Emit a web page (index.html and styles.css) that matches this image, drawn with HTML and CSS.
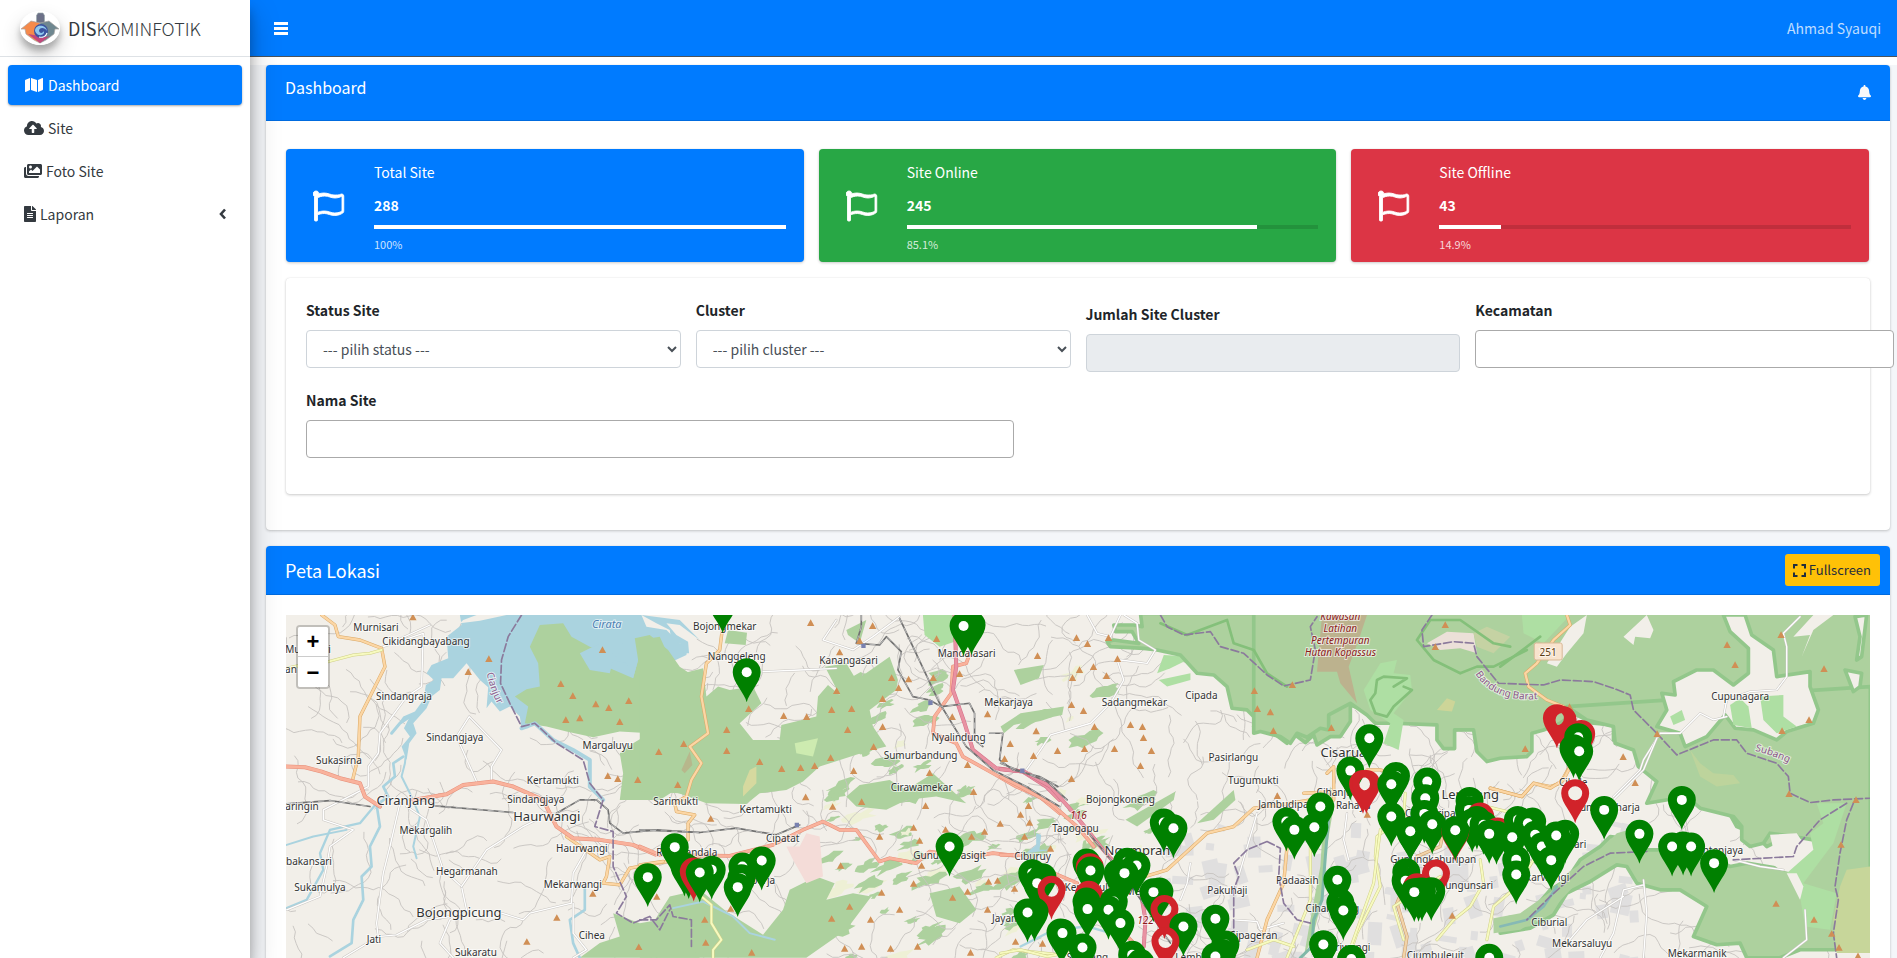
FILE: index.html
```html
<!DOCTYPE html>
<html lang="id">
<head>
<meta charset="utf-8">
<title>Diskominfotik - Dashboard</title>
<link rel="stylesheet" href="styles.css">
</head>
<body>
<svg width="0" height="0" class="symbols" aria-hidden="true">
  <symbol id="flag" viewBox="0 0 512 512"><path fill="#fff" stroke="#fff" stroke-width="14" d="M336.170 80c-49.130 0-93.300-32-161.910-32-31.300 0-58.300 6.480-80.720 13.170C95.760 34.200 74.700 16 48 16 21.530 16 0 37.500 0 64c0 17.700 9.700 33.200 24 41.500V484c0 6.600 5.400 12 12 12h24c6.600 0 12-5.400 12-12v-85.600c28.300-12.100 63.700-22.400 114.400-22.400 49.100 0 93.300 32 161.900 32 58.500 0 102-22.600 128.500-40 9.400-6.200 15.200-16.700 15.200-28V95.900c0-23.300-24.200-38.800-45.400-29C412.600 82.500 371.900 80 336.170 80zM464 336c-21.800 15.400-60.800 32-115.700 32-59.900 0-102-32-161.900-32-43.400 0-96.400 9.400-114.400 24V128c21.800-15.400 60.800-32 115.700-32 59.900 0 102 32 161.900 32 43.300 0 92.400-16 114.400-32v240z"/></symbol>
</svg>
<div class="app">
  <aside class="sidebar">
    <a class="brand" href="#">
      <svg class="brand-logo" viewBox="0 0 40 34" aria-hidden="true">
        <ellipse cx="20" cy="17" rx="20" ry="17" fill="#fff"/>
        <path d="M16.500 12V4.500L18 2h5l1.500 2.500V12z" fill="#6c7188" stroke="#9aa" stroke-width=".6"/>
        <path d="M1 18l10-8 9 2v20l-6-3-8-6-1-5z" fill="#f58a4b" stroke="#a9a3a0" stroke-width=".7"/>
        <path d="M39 18l-10-8-9 2v20l6-3 8-6 1-5z" fill="#6f8790" stroke="#a9a3a0" stroke-width=".7"/>
        <path d="M8 23l12 9 10-7-4 1-12-2z" fill="#c2477a"/>
        <circle cx="21" cy="20" r="7" fill="#3c54a0"/>
        <path d="M15 20c0-7 11-7 12 0-2-4-8-4-8 0 1 3 4 2 5 0 1 5-7 6-9 0z" fill="#8fc7ee"/>
        <path d="M19 26c4 1 7-1 8-4" fill="none" stroke="#fff" stroke-width="1.200"/>
      </svg>
      <span class="brand-text"><b>DIS</b>KOMINFOTIK</span>
    </a>
    <nav class="side-nav">
      <a class="side-link active" href="#">
        <svg width="20" height="16" viewBox="0 0 576 512"><path fill="currentColor" d="M0 117.660v346.320c0 11.320 11.430 19.060 21.940 14.860L160 416V32L20.120 87.950A32.006 32.006 0 0 0 0 117.660zM192 416l192 64V96L192 32v384zM554.060 33.160L416 96v384l139.880-55.950A31.996 31.996 0 0 0 576 394.340V48.020c0-11.320-11.430-19.060-21.940-14.860z"/></svg>
        <span>Dashboard</span></a>
      <a class="side-link" href="#">
        <svg width="20" height="16" viewBox="0 0 640 512"><path fill="currentColor" d="M537.600 226.600c4.100-10.700 6.400-22.400 6.400-34.600 0-53-43-96-96-96-19.700 0-38.100 6-53.300 16.200C367 64.200 315.300 32 256 32c-88.400 0-160 71.600-160 160 0 2.700.1 5.400.2 8.100C40.200 219.800 0 273.200 0 336c0 79.500 64.500 144 144 144h368c70.700 0 128-57.300 128-128 0-61.900-44-113.600-102.400-125.400zM393.400 288H328v112c0 8.800-7.200 16-16 16h-48c-8.800 0-16-7.200-16-16V288h-65.400c-14.300 0-21.400-17.200-11.300-27.300l105.400-105.400c6.200-6.200 16.400-6.200 22.600 0l105.400 105.400c10.100 10.100 2.900 27.300-11.300 27.300z"/></svg>
        <span>Site</span></a>
      <a class="side-link" href="#">
        <svg width="18" height="16" viewBox="0 0 576 512"><path fill="currentColor" d="M480 416v16c0 26.500-21.500 48-48 48H48c-26.500 0-48-21.500-48-48V176c0-26.500 21.500-48 48-48h16v208c0 44.100 35.900 80 80 80h336zm96-80V80c0-26.500-21.500-48-48-48H144c-26.500 0-48 21.500-48 48v256c0 26.500 21.500 48 48 48h384c26.500 0 48-21.500 48-48zM256 128c0 26.500-21.500 48-48 48s-48-21.500-48-48 21.500-48 48-48 48 21.500 48 48zm-96 144l55.500-55.500c4.700-4.700 12.300-4.700 17 0L272 256l135.500-135.500c4.700-4.700 12.300-4.700 17 0L512 208v112H160v-48z"/></svg>
        <span>Foto Site</span></a>
      <a class="side-link" href="#">
        <svg width="12" height="16" viewBox="0 0 384 512"><path fill="currentColor" d="M224 136V0H24C10.700 0 0 10.700 0 24v464c0 13.300 10.700 24 24 24h336c13.300 0 24-10.700 24-24V160H248c-13.200 0-24-10.800-24-24zm64 236c0 6.600-5.400 12-12 12H108c-6.600 0-12-5.400-12-12v-8c0-6.600 5.400-12 12-12h168c6.600 0 12 5.400 12 12v8zm0-64c0 6.600-5.400 12-12 12H108c-6.600 0-12-5.400-12-12v-8c0-6.600 5.400-12 12-12h168c6.600 0 12 5.400 12 12v8zm0-72v8c0 6.600-5.400 12-12 12H108c-6.600 0-12-5.400-12-12v-8c0-6.600 5.400-12 12-12h168c6.600 0 12 5.400 12 12zm96-114.100v6.100H256V0h6.100c6.400 0 12.500 2.500 17 7l97.900 98c4.500 4.500 7 10.600 7 16.900z"/></svg>
        <span>Laporan</span>
        <svg class="side-arrow" width="7" height="12" viewBox="0 0 7 12"><path fill="none" stroke="currentColor" stroke-width="2.600" d="M6 1.500L2 6l4 4.500"/></svg></a>
    </nav>
  </aside>

  <div class="main">
    <header class="topbar">
      <button class="menu-btn" aria-label="Menu"><svg width="14" height="13" viewBox="0 0 14 13"><path fill="#fff" d="M0 0h14v3H0zM0 5h14v3H0zM0 10h14v3H0z"/></svg></button>
      <a class="user" href="#">Ahmad Syauqi</a>
    </header>
    <div class="content-top"></div>
    <main class="content">
      <section class="card">
        <div class="card-head">
          <h1 class="title">Dashboard</h1>
          <button class="bell" aria-label="Notifikasi"><svg width="13" height="15" viewBox="0 0 448 512"><path fill="#f8f9fa" d="M224 512c35.320 0 63.970-28.650 63.970-64H160.030c0 35.350 28.650 64 63.970 64zm215.390-149.710c-19.320-20.760-55.470-51.990-55.470-154.290 0-77.700-54.480-139.900-127.940-155.160V32c0-17.670-14.320-32-31.980-32s-31.980 14.330-31.980 32v20.840C118.560 68.100 64.080 130.300 64.080 208c0 102.300-36.150 133.530-55.470 154.290-6 6.450-8.660 14.160-8.610 21.710.11 16.400 12.980 32 32.100 32h383.800c19.120 0 32-15.600 32.100-32 .05-7.550-2.610-15.270-8.610-21.710z"/></svg></button>
        </div>
        <div class="card-body">
          <div class="stats">
            <article class="stat blue">
              <svg class="flag"><use href="#flag"/></svg>
              <div class="stat-info"><span>Total Site</span><b>288</b><div class="bar"><i style="width:100%"></i></div><small>100%</small></div>
            </article>
            <article class="stat green">
              <svg class="flag"><use href="#flag"/></svg>
              <div class="stat-info"><span>Site Online</span><b>245</b><div class="bar"><i style="width:85.1%"></i></div><small>85.1%</small></div>
            </article>
            <article class="stat red">
              <svg class="flag"><use href="#flag"/></svg>
              <div class="stat-info"><span>Site Offline</span><b>43</b><div class="bar"><i style="width:14.9%"></i></div><small>14.9%</small></div>
            </article>
          </div>
          <form class="filters">
            <div class="field"><label for="status">Status Site</label><select id="status"><option>--- pilih status ---</option></select></div>
            <div class="field"><label for="cluster">Cluster</label><select id="cluster"><option>--- pilih cluster ---</option></select></div>
            <div class="field lowered"><label for="jumlah">Jumlah Site Cluster</label><input id="jumlah" type="text" disabled></div>
            <div class="field"><label for="kecamatan">Kecamatan</label><input class="picker" id="kecamatan" type="text"></div>
            <div class="field wide"><label for="nama">Nama Site</label><input class="picker" id="nama" type="text"></div>
          </form>
        </div>
      </section>

      <section class="card">
        <div class="card-head map-head">
          <h2 class="title large">Peta Lokasi</h2>
          <button class="full-btn"><svg width="13" height="13" viewBox="0 0 13 13"><path fill="none" stroke="currentColor" stroke-width="2" d="M1 4.500V1h3.500M8.500 1H12v3.500M12 8.500V12H8.500M4.500 12H1V8.500"/></svg>Fullscreen</button>
        </div>
        <div class="map-body">
          <div class="map">
            <svg class="map-canvas" id="map" viewBox="285 615 1585 500" preserveAspectRatio="xMidYMin slice"></svg>
            <div class="zoom"><button aria-label="Zoom in">+</button><button aria-label="Zoom out">−</button></div>
          </div>
        </div>
      </section>
    </main>
  </div>
</div>
<script src="map.js"></script>
</body>
</html>
```
FILE: styles.css
```css
* { box-sizing: border-box; }
body { margin: 0; font: 14px/24px "Noto Sans CJK SC", "Noto Sans", sans-serif; color: #212529; background: #f4f6f9; }
button, input, select { font: inherit; }
button { cursor: pointer; }
a { text-decoration: none; }
svg { flex: none; }
.symbols { display: none; }
.app { display: flex; height: 100vh; overflow: hidden; }

.sidebar { width: 250px; flex: none; background: #fff; z-index: 2; box-shadow: 0 14px 28px rgba(0,0,0,.25), 0 10px 10px rgba(0,0,0,.22); }
.brand { display: flex; align-items: center; gap: 8px; height: 57px; padding: 0 20px; border-bottom: 1px solid #dee2e6; color: #343a40; }
.brand-logo { width: 40px; height: 34px; border-radius: 50%; box-shadow: 0 10px 20px rgba(0,0,0,.19), 0 6px 6px rgba(0,0,0,.23); }
.brand-text { font-size: 18px; font-weight: 300; }
.brand-text b { font-weight: 400; }
.side-nav { display: grid; gap: 3px; padding: 8px; }
.side-link { display: flex; align-items: center; gap: 4px; height: 40px; padding: 0 16px; border-radius: 4px; color: #343a40; }
.side-link.active { background: #007bff; color: #fff; box-shadow: 0 1px 3px rgba(0,0,0,.12), 0 1px 2px rgba(0,0,0,.24); }
.side-arrow { margin-left: auto; }

.main { flex: 1; min-width: 0; }
.topbar { display: flex; align-items: center; justify-content: space-between; height: 57px; padding: 0 16px 0 24px; background: #007bff; border-bottom: 1px solid #4b545c; }
.menu-btn { display: flex; padding: 0; border: 0; background: none; }
.user { color: rgba(255,255,255,.75); }
.content-top { height: 8px; background: #fff; }
.content { display: grid; gap: 16px; padding: 0 7px 0 16px; }
.card { min-width: 0; background: #fff; border-radius: 4px; box-shadow: 0 0 1px rgba(0,0,0,.125), 0 1px 3px rgba(0,0,0,.2); }
.card-head { display: flex; justify-content: space-between; height: 56px; padding: 10px 19px; background: #007bff; color: #fff; border-bottom: 1px solid rgba(0,0,0,.125); border-radius: 4px 4px 0 0; }
.title { margin: 0; font-size: 16px; font-weight: 400; line-height: 24px; }
.title.large { font-size: 18px; line-height: 32px; }
.bell { display: flex; align-items: center; padding: 0; border: 0; background: none; }
.card-body { padding: 28px 20px 36px; }
.stats { display: grid; grid-template-columns: repeat(3, 1fr); gap: 15px; padding-right: 1px; }
.stat { display: flex; align-items: center; height: 113px; padding: 8px; border-radius: 4px; color: #fff; box-shadow: 0 0 1px rgba(0,0,0,.125), 0 1px 3px rgba(0,0,0,.2); }
.blue { background: #007bff; }
.green { background: #28a745; }
.red { background: #dc3545; }
.flag { width: 32px; height: 32px; margin: 0 19px; }
.stat-info { display: flex; flex: 1; flex-direction: column; padding: 2px 10px 0; }
.stat-info b { margin-top: 9px; }
.bar { height: 4px; margin: 8px 0 5px; background: rgba(0,0,0,.125); }
.bar i { display: block; height: 100%; background: #fff; }
.stat small { font-size: 11px; line-height: 20px; color: rgba(255,255,255,.8); }

.filters { display: grid; grid-template-columns: repeat(4, minmax(0, 1fr)); gap: 20px 15px; height: 216px; margin-top: 16px; padding: 20px; align-content: start; border-radius: 4px; box-shadow: 0 0 1px rgba(0,0,0,.125), 0 1px 3px rgba(0,0,0,.2); }
.field label { display: block; margin-bottom: 8px; font-weight: 700; }
.field { height: 70px; }
.lowered { padding-top: 4px; }
.field input, .field select { display: block; width: 100%; height: 38px; border: 1px solid #ced4da; border-radius: 4px; background: #fff; color: #495057; }
.field select { padding: 0 12px; }
.field input:disabled { background: #e9ecef; }
.field .picker { width: 419px; border-color: #aaa; }
.wide { grid-column: span 4; }
.wide .picker { width: 708px; }

.map-head { height: 49px; padding: 8px 10px 8px 19px; }
.full-btn { display: flex; align-items: center; gap: 3px; height: 32px; padding: 0 9px 0 8px; border: 0; border-radius: 3px; background: #ffc107; color: #1f2d3d; font-size: 13px; }
.map-body { padding: 20px; }
.map { position: relative; overflow: hidden; background: #f2efe9; }
.map-canvas { display: block; width: 100%; font-family: "Noto Sans", sans-serif; }
.zoom { position: absolute; top: 10px; left: 10px; border: 2px solid rgba(0,0,0,.2); border-radius: 4px; background-clip: padding-box; }
.zoom button { display: block; width: 30px; height: 30px; padding: 0; border: 0; background: #fff; color: #000; font: bold 22px/29px "Liberation Sans", sans-serif; }
.zoom button:first-child { border-bottom: 1px solid #ccc; border-radius: 2px 2px 0 0; }
.zoom button:last-child { border-radius: 0 0 2px 2px; }
.label { font-size: 10px; fill: #333; stroke: #fff; stroke-width: 2px; stroke-opacity: .6; paint-order: stroke; text-anchor: middle; }
.label.town { font-size: 13px; }
.label.water { fill: #4d80b3; font-style: italic; font-size: 11px; }
.label.area { fill: #8d5a8a; text-anchor: start; }
.label.restricted { fill: #8b1a1a; font-style: italic; }
.label.shield { fill: #5a3a10; }
```
FILE: map.js
```js
// Tiles are drawn at three units per screen pixel.
const A = [279, 600], B = [639, 600], C = [1000, 600], D = [1260, 720], E = [1500, 520], F = [1260, 600];
const out = [];
const wrap = (t, body) => `<g transform="translate(${t[0]} ${t[1]}) scale(.33333)">${body}</g>`;
const poly = (t, pts, fill, extra = '') => out.push(wrap(t, `<path d="M${pts}Z" fill="${fill}" stroke-linejoin="round" ${extra}/>`));
const line = (t, pts, color, w, extra = '') => out.push(wrap(t, `<path d="M${pts}" fill="none" stroke="${color}" stroke-width="${w}" stroke-linejoin="round" stroke-linecap="round" ${extra}/>`));
const road = (t, pts, fill, edge, w) => { line(t, pts, edge, w + 3); line(t, pts, fill, w); };

let seed = 41;
const rnd = () => (seed = (seed * 16807) % 2147483647) / 2147483647;

out.push('<rect x="285" y="615" width="1585" height="500" fill="#f2efe9"/>');

// built-up areas
for (let i = 0; i < 130; i++) {
  const x = 1150 + rnd() * 480, y = 820 + rnd() * 150;
  out.push(`<rect x="${x | 0}" y="${y | 0}" width="${6 + rnd() * 16 | 0}" height="${5 + rnd() * 20 | 0}" fill="#e0dfdf" transform="rotate(${rnd() * 40 - 20 | 0} ${x | 0} ${y | 0})"/>`);
}

// small woods and fields
for (let i = 0; i < 130; i++) {
  const x = 830 + rnd() * 320, y = 670 + rnd() * 290;
  if (x > 1020 && y > 860 || x > 980 && y < 780 && rnd() < .8) continue;
  let d = '';
  const n = 14, r = 4 + rnd() * 8;
  for (let k = 0; k < n; k++) {
    const a = k / n * 6.283, q = r * (.4 + rnd() * .8);
    d += (k ? 'L' : 'M') + (x + Math.cos(a) * q * 1.5 | 0) + ' ' + (y + Math.sin(a) * q * .7 - Math.cos(a) * q * .5 | 0);
  }
  out.push(`<path d="${d}Z" fill="${rnd() < .75 ? '#add19e' : '#eef0d5'}"/>`);
}

// minor roads
let minor = '';
for (let i = 0; i < 560; i++) {
  let x = 285 + rnd() * 1585, y = 600 + rnd() * 370, a = rnd() * 6.283;
  minor += `M${x | 0} ${y | 0}`;
  const n = 4 + rnd() * 12;
  for (let k = 0; k < n; k++) {
    a += (rnd() - .5) * 1.5;
    x += Math.cos(a) * 6; y += Math.sin(a) * 6;
    minor += `L${x.toFixed(1)} ${y.toFixed(1)}`;
  }
}
out.push(`<path d="${minor}" fill="none" stroke="#c6c3c0" stroke-width=".9"/>`);

// lake
poly(A, '545 75L500 110 505 175 455 195 440 220 462 240 438 255 430 300 405 335 370 350 345 385 370 365 390 350 372 385 390 410 365 440 380 480 388 430 410 400 400 370 440 325 455 290 480 270 485 235 520 235 560 190 600 240 625 262 620 325 635 305 660 335 690 320 720 350 725 385 745 385 765 360 860 300 960 330 1070 235 1220 165 1225 130 1180 110 1150 60 1100 45 540 45', '#aad3df');
poly(A, '540 70L600 62 680 45 590 45 550 60', '#f2efe9');
poly(A, '1085 45L1100 80 1160 90 1200 130 1240 140 1260 45', '#f2efe9');
poly(A, '1085 45L1130 70 1170 90 1175 120 1210 135 1212 160 1228 160 1225 125 1190 105 1160 70 1200 75 1260 120 1200 60', '#aad3df');

// forests
const wood = '#add19e';
poly(A, '780 75L850 70 875 110 930 140 960 150 980 200 1060 235 1075 180 1065 115 1110 105 1165 150 1200 200 1260 240 1260 600 1180 575 1140 600 1020 600 1030 520 1020 460 1060 430 1110 400 1020 395 940 412 860 395 800 380 735 370 745 320 705 290 740 268 780 260 775 190 750 140', wood);
poly(A, '900 160L930 210 990 220 1000 180 1040 190 1060 235 1075 180 1030 130 1010 170 960 130', '#aad3df');
poly(B, '0 120L60 110 85 165 130 220 190 205 200 290 235 260 270 270 340 260 365 310 300 370 340 420 420 420 425 375 530 350 535 290 565 255 600 285 556 200 620 190 650 240 750 170 775 240 770 270 690 330 700 380 740 440 680 455 540 500 490 545 440 570 360 580 320 612 200 610 120 580 0 575', wood);
poly(B, '255 130L265 90 322 98 318 135', wood);
poly(B, '90 890L180 870 260 935 370 1005 430 930 450 870 530 830 585 850 560 900 640 880 695 890 620 990 500 1074 0 1074 20 1000', wood);
poly(B, '620 590L660 555 750 540 800 570 880 520 980 610 890 590 800 600 740 630 650 620', wood);
poly(B, '870 880L960 860 1010 930 960 970 890 950', wood);
poly(B, '620 90L680 60 660 130 625 105', wood);
poly(B, '850 45L945 45 945 125 900 140 855 105', '#aedfa3');
poly(B, '465 430L535 415 520 470 470 460', '#cdebb0');
poly(B, '330 510L350 500 350 550 310 590 310 560', '#d6d99f');
poly(B, '125 510L150 455 158 495 135 520', '#b7b78c');
poly(A, '900 1074L960 1030 1020 1010 1000 940 1080 970 1140 960 1200 1000 1260 1074', wood);
poly(B, '440 740L480 740 500 700 540 710 550 830 500 850 460 780', '#f4dcd8');
poly(C, '40 210L130 195 115 235 60 255', wood);
poly(C, '0 380L60 340 190 320 185 345 40 375 10 400', wood);
poly(C, '470 220L490 165 580 170 510 205', '#aedfa3');
poly(C, '475 240L570 220 570 240 500 260', '#aedfa3');
poly(C, '590 670L700 570 705 600 640 660', wood);
poly(C, '375 660L525 575 520 600 410 680', wood);
const edge = 'stroke="#93c78b" stroke-width="11"';
poly(C, '420 40L425 80 400 75 340 75 345 95 395 95 415 130 340 120 320 125 330 140 430 145 470 150 540 165 590 220 640 225 680 260 695 325 740 330 770 360 760 380 820 400 860 430 885 405 915 428 940 405 950 435 990 410 1020 410 1050 365 1050 315 1120 340 1140 370 1260 370 1260 40', wood, edge);
poly(F, '-20 30L-20 400 0 395 60 410 90 430 110 400 140 412 180 385 205 390 205 345 270 310 320 345 345 370 400 370 530 375 530 420 550 446 583 446 583 390 640 390 650 455 680 485 720 475 800 470 815 455 815 400 850 390 900 370 940 340 1000 370 1060 375 1060 420 1120 435 1135 500 1200 520 1250 540 1380 590 1430 680 1480 700 1520 740 1600 700 1830 600 1840 30', wood, edge);
poly(E, '200 560L260 600 340 620 345 670 400 690 415 740 470 785 440 850 560 830 600 865 700 890 725 920 725 960 750 980 790 970 810 940 880 950 940 960 960 990 920 1060 860 1050 740 1030 690 1040 600 1000 500 990 440 990 410 960 330 950 300 980 240 1020 200 1080 150 1110 90 1180 0 1210 0 1240 90 1225 160 1185 200 1120 270 1085 350 1035 380 1040 410 1090 480 1110 540 1110 620 1160 580 1250 650 1275 720 1270 740 1314 840 1314 900 1290 1111 1290 1111 500', wood, edge);
poly(E, '-20 1195L60 1180 160 1110 200 1060 290 1000 350 940 420 920 420 1000 300 1020 220 1100 150 1175 60 1230 -20 1240', wood);
poly(E, '810 945L890 940 910 970 950 980 880 1060 840 1050 800 1020 820 990', '#f2efe9');
poly(E, '910 1090L1000 970 1040 850 950 850 970 910 930 940 940 990 860 1060 900 1130 915 1220 990 1230 1010 1120', '#aedfa3');
poly(E, '1020 1100L1040 1050 1111 1040 1111 1300 1010 1300 1000 1200', '#c7d69a');
poly(E, '860 1060L890 1060 910 1100 900 1140', '#f2efe9');
poly(E, '520 485L590 450 640 450 700 495 745 460 745 385 690 335 670 285 735 285 755 345 820 390 830 470 930 455 930 500 955 570 940 610 860 635 830 660 760 630 705 625 675 585 620 650 555 680 540 640 470 620 500 570 485 520 525 525', '#f2efe9', edge);
poly(E, '905 410L940 330 1000 285 940 285 880 350 930 345', '#f2efe9');
poly(E, '1065 290L1100 285 1085 410 1070 420 1080 350', '#f2efe9', edge);
poly(E, '1035 450L1085 460 1080 500 1060 515', '#f2efe9', edge);
poly(E, '370 350L440 285 460 330 450 355 405 350 400 375', '#f2efe9');
poly(E, '690 555L720 535 745 560 755 625 700 615', '#aedfa3');
poly(E, '780 530L850 525 850 590 890 620 830 640 790 600', '#aedfa3');
poly(E, '510 590L545 570 555 600 520 615', '#aedfa3');
poly(E, '65 285L210 285 130 370 70 340', '#aedfa3');
poly(E, '210 320L260 285 250 340 200 400 170 440 140 430', '#f2efe9');
poly(E, '570 690L600 730 640 760 700 765 720 790 650 800 600 770', '#bdd49c');
poly(F, '500 130L560 95 640 100 650 160 600 145 540 150', '#ebe0d8');
poly(F, '640 100L680 80 750 110 700 160 650 140', '#c5d2a3');
poly(F, '310 270L360 190 410 180 400 220 450 225 455 270 400 340 430 360 415 450 370 430 390 370 330 330', '#aedfa3');
poly(F, '530 330L560 295 585 305 575 335', '#cdd598');
poly(F, '185 45L320 45 295 120 265 200 290 310 240 250 230 215 170 215', '#bcb28e');
line(F, '400 260L440 235 370 230 350 240 345 280 330 300 345 340 380 350 400 320 455 270 430 260', '#84c07a', 8);
line(F, '800 150L700 200 650 200 600 220 520 180 470 120 510 60 600 60 700 130 750 140', '#84c07a', 8);
line(E, '0 440L120 350', '#84c07a', 8);
line(C, '480 70L560 105 680 60 700 130 760 150 800 220 860 260', '#84c07a', 8);
poly(C, '990 560L1000 620 975 770 970 880 940 1000 910 1074 930 960 960 800 970 640', '#add19e');

// rivers
const river = '#aad3df';
line(A, '390 350L360 370 335 400', river, 9);
line(A, '370 470L340 490 345 530 310 560 325 590 290 615 300 680 270 740 275 800 245 830 250 900 220 960 215 1030 150 1070', river, 8);
line(A, '290 610L240 670 150 690 120 760 130 810 80 900 20 925', river, 7);
line(A, '20 735L100 710 200 690', river, 6);
line(A, '380 440L375 490 365 530 390 580 420 650 400 740 410 775', river, 6);
line(A, '725 385L765 370 820 420 880 450 930 480 930 560 970 600', river, 12);
line(A, '915 860L915 930 870 960 880 1030 900 1074', river, 8);
line(B, '100 925L190 905 280 950 330 1000 405 1020', river, 6);
line(C, '60 1040L160 990 260 980 330 1000', river, 7);
line(C, '985 650L975 770 965 900 940 960 935 1040 900 1074', '#7fb8a8', 9);
line(E, '170 1100L130 1160 80 1200 0 1220', '#86b9b5', 8);
poly(B, '1160 760L1190 735 1190 700 1205 705 1200 750 1240 750', river);

// secondary roads
const white = (t, p) => road(t, p, '#fff', '#c9c6c2', 4);
white(A, '450 75L310 140 430 100 425 260 380 290 300 400 295 460 265 500 265 560 130 630 130 660 220 690 150 740 140 800 120 890 20 930');
white(A, '590 545L530 410 568 350 665 450 635 500 635 545');
white(A, '360 610L330 740 310 820 290 970 295 1010 190 1074');
white(A, '380 620L440 660 490 810 545 860 560 930 510 960 480 1030 520 1074');
white(A, '770 660L730 680 620 750 545 860');
white(A, '300 1010L350 1005 440 960 510 950 M665 940L730 960 750 940 875 910 880 820 920 750');
white(A, '880 910L880 1000 920 1050 880 1074');
white(B, '370 215L480 210 590 205');
white(B, '590 60L550 120 640 150 700 110 780 50');
white(C, '260 45L290 100 330 110 360 45 M350 180L370 240 330 310 270 370 150 405 120 450 70 520');
white(C, '360 180L440 190 465 150 415 120 410 70 370 45');
white(C, '770 640L735 760 700 880');
white(C, '1040 640L1030 720 1045 780 M700 960L770 965 780 990 850 970');
white(F, '1200 400L1150 480 1140 510 1060 590');
white(E, '470 655L430 750 320 860 M600 580L540 640 480 640 M680 590L640 600 600 580 M670 590L680 540 750 515 830 510 860 470 860 380 850 340 900 290');
white(E, '430 1080L440 1180 430 1314 M430 1095L370 1110 340 1240 300 1314 M370 1130L260 1200 200 1270');
white(E, '850 1314L920 1260 915 1170 M700 1020L780 1040 850 1050');
white(C, '570 790L560 850 540 900');

// main roads
const orange = (t, p) => road(t, p, '#fcd6a4', '#d9a866', 7);
orange(A, '125 45L165 75 175 110 240 120 305 145 315 200 240 350 235 470 218 540');
orange(A, '860 710L960 780 990 770 980 830 970 850 1020 855 1050 805 1160 785');
orange(B, '250 70L240 150 200 190 185 290 205 400 150 440 185 490 155 540 140 590 105 610 110 635 165 645 145 670 145 720 M70 785L0 795');
orange(C, '400 840L500 810 620 700 700 680 760 625 840 615 930 600 M1000 600L1000 500 980 520 M860 740L850 850 800 960 770 1074');
orange(C, '910 580L1000 575 M1100 510L1140 510 1200 530');
orange(F, '920 45L930 75 880 120 830 190 795 220 805 260 860 300 910 320 M690 565L785 590 820 550 870 560 900 550 940 480');
road(D, '690 205L785 230 820 190 870 205 910 180 940 120', '#fcd6a4', '#d9a866', 7);
road(D, '550 330L540 380 470 410 410 550 440 650 430 714', '#f2d3a8', '#c69a68', 7);
const yellow = (t, p) => road(t, p, '#f7fabf', '#cfcf88', 6);
yellow(A, '20 205L65 195 M145 185L220 165 270 160 305 150');
yellow(B, '185 890L215 915 215 970 245 1020 220 1050 220 1074');
yellow(B, '1070 1074L1120 1050 1260 1065');
yellow(C, '0 1060L60 1050 140 1070 250 1050');
yellow(D, '435 220L430 290 350 350 345 410 360 500 290 640 265 714 M660 420L670 490 630 560 580 600 530 660 M540 470L400 560 430 660 M820 420L770 500 700 560 680 660');
yellow(C, '930 740L930 900 860 1074 M1140 690L1120 850 1040 1074 M880 1040L820 1020 740 1050');
yellow(D, '640 250L760 280 820 290');
road(A, '15 500L75 502 125 515 180 535 240 550 255 590 300 620 M400 600L500 583 550 555 640 545 700 560 790 600 830 680 880 715 960 720 1060 735 1130 765 1260 770', '#f9b29c', '#e58f7a', 9);
road(B, '0 740L60 765 270 768 400 735 490 690 550 665 600 690 650 690 720 785 750 775 830 790 870 755 900 760 M1000 770L1060 760 1130 768', '#f9b29c', '#e58f7a', 8);
road(B, '1010 60L1005 120 980 190 940 200 935 280 885 350 880 400 950 430 970 470 1060 520 1130 560 1200 590 1260 640', '#f9b29c', '#e58f7a', 8);
road(C, '0 530L60 560 150 610 230 680 280 740 M0 765L60 765 M160 820L230 850 M370 1000L400 1030', '#f9b29c', '#e58f7a', 8);
road(B, '945 45L950 200 940 270 975 370 1000 450 1070 505 1150 515 1220 560 1260 600', '#e892a2', '#d46f88', 9);
road(C, '0 508L70 515 150 560 220 640 300 740 330 775 420 870 435 960 430 1040', '#e892a2', '#d46f88', 9);
// railway
const rail = (t, p) => { line(t, p, '#707070', 5); line(t, p, '#ddd', 2, 'stroke-dasharray="16 16"'); };
rail(A, '20 612L150 602 270 620 M465 618L700 638 M830 640L900 600 950 600 985 630 990 670 1030 700 1130 690 1260 698');
rail(B, '0 690L180 698 290 685 410 705 480 675 M780 55L900 310 980 440 1060 510 1160 560 1260 620');
rail(B, '665 45L665 80 650 130 720 135 740 110 785 155 775 210 820 290 870 300 905 320 990 310 1005 340 1005 420 1030 440 M1050 400L1090 400 1080 480 1120 510 1200 530 1255 560');
rail(C, '0 490L140 545 200 600 M265 700L340 790 400 870 510 1030');

// administrative borders
const border = (t, p) => line(t, p, '#8b7a9c', 5, 'stroke-dasharray="24 9"');
border(A, '725 45L685 110 665 180 662 250 690 310 725 380 765 370 830 430 910 480 930 550 970 600 945 680 1000 695 1000 800 1040 890 1010 940 1060 970 1110 950 1140 990 1170 930');
border(B, '0 960L50 960 90 915 100 950 155 960 155 1040');
border(C, '480 45L500 80 550 105 630 95 660 140 730 160 800 225 850 258 930 240 945 150 930 80 950 50');
border(C, '800 725L740 750 700 790 715 830 700 870 700 1000 M800 725L840 745 835 830 850 910 890 960 930 970');
border(F, '515 45L485 90 490 140 580 125 640 130 650 170 715 250 850 255 900 240 1000 245 1060 265 1110 285 1120 330 1190 400');
border(E, '470 640L530 705 640 660 710 660 740 700 830 730 865 770 870 820 930 848 1000 840 1110 835 M1040 850L960 900 890 980 880 1010 700 1020 M1060 850L1040 900 1020 1000 1005 1100 1015 1140 1000 1240 1010 1314 M440 995L330 1000 250 1040 150 1130 80 1200');

// peaks
const peaks = [
  [A, '399 51 627 176 565 215 968 149 843 251 879 287 948 312 987 323 1047 302 858 359 900 354 1020 365 1137 455 1212 431 984 527 1014 536 1074 539 1194 554 939 881 1131 890 831 953 741 1025 1077 1041'],
  [B, '513 68 699 77 660 122 600 156 756 233 807 237 777 263 881 233 960 221 891 116 1194 167 591 272 729 296 576 329 636 326 327 326 432 347 501 350 624 389 729 380 702 440 938 350 1044 342 1190 393 1112 431 1182 467 1095 476 984 494 870 518 1002 575 261 389 261 452 360 485 426 506 483 503 525 497 573 473 642 512 498 591 579 620 666 605 858 617 1167 617 1143 644 1170 668 1082 671 1035 695 1155 710 996 710 918 689 822 683 720 710 840 722 846 797 603 797 822 851 984 875 726 878 939 893 1047 845 1074 842 1125 866 1233 746 213 656 630 920 576 956 693 959 780 929 1044 929 195 959 273 926 198 1028 336 1058 615 1046 666 1040 753 1046 834 1040 993 1058 1128 1025 1209 1031'],
  [C, '228 113 261 131 324 113 351 176 279 200 237 209 216 233 318 227 213 314 249 332 282 380 390 374 426 380 429 413 453 452 342 446 252 446 171 452 420 497 213 536 762 272 771 326 810 336 819 392 876 254 993 383 831 587 1101 644'],
  [F, '555 74 525 140 795 446 928 320 1089 470 1125 548'],
  [E, '681 374 705 434 843 344 972 446 927 599 846 632 471 641 867 821 1068 839 1023 974 828 1151 942 1199 995 1241 1017 1283 1074 1308'],
  [D, '576 587']
];
for (const [t, s] of peaks) {
  const v = s.split(' ').map(Number);
  let d = '';
  for (let i = 0; i < v.length; i += 2) d += `M${v[i] - 11} ${v[i + 1] + 10}h22l-11 -20z`;
  out.push(wrap(t, `<path d="${d}" fill="#d08f55"/>`));
}
// stations
out.push(wrap(B, '<path d="M665 131h13v13h-13zM866 302h13v13h-13zM1142 506h13v13h-13zM465 669h13v13h-13z" fill="#7981b0"/>'));
out.push('<rect x="1534" y="643" width="28" height="17" rx="2" fill="#f8e3cd" stroke="#d9b896"/>');

// place names: tile, x centre, baseline, text, kind
const labels = [
  [A, 287, 92, 'Murnisari'], [A, 439, 136, 'Cikidangbayabang'], [A, 85, 160, 'Mulyasari'], [A, 32, 220, 'an'], [A, 373, 301, 'Sindangraja'], [A, 526, 422, 'Sindangjaya'], [A, 178, 491, 'Sukasirna'],
  [A, 67, 631, 'aringin'], [A, 377, 615, 'Ciranjang', 'town'], [A, 439, 703, 'Mekargalih'], [A, 86, 796, 'bakansari'], [A, 119, 874, 'Sukamulya'], [A, 562, 824, 'Hegarmanah'],
  [A, 538, 950, 'Bojongpicung', 'town'], [A, 283, 1028, 'Jati'], [A, 589, 1067, 'Sukaratu'], [A, 818, 553, 'Kertamukti'], [A, 768, 608, 'Sindangjaya'], [A, 802, 664, 'Haurwangi', 'town'],
  [A, 906, 756, 'Haurwangi'], [A, 880, 864, 'Mekarwangi'], [A, 937, 1016, 'Cihea'], [A, 983, 446, 'Margaluyu'], [A, 981, 83, 'Cirata', 'water'],
  [B, 254, 89, 'Bojongmekar'], [B, 290, 179, 'Nanggeleng'], [B, 626, 192, 'Kanangasari'], [B, 981, 171, 'Mandalasari'], [B, 1107, 319, 'Mekarjaya'], [B, 958, 422, 'Nyalindung'],
  [B, 844, 476, 'Sumurbandung'], [B, 845, 574, 'Cirawamekar'], [B, 107, 616, 'Sarimukti'], [B, 379, 640, 'Kertamukti'], [B, 428, 725, 'Cipatat'], [B, 141, 768, 'Rajamandala'],
  [B, 340, 853, 'Sumberja'], [B, 929, 776, 'Gunungmasigit'], [B, 1178, 780, 'Ciburuy'], [B, 1130, 965, 'Jayamekar'],
  [C, 401, 319, 'Sadangmekar'], [C, 604, 297, 'Cipada'], [C, 699, 484, 'Pasirlangu'], [C, 760, 551, 'Tugumukti'], [C, 360, 610, 'Bojongkoneng'], [C, 226, 697, 'Tagogapu'],
  [C, 410, 766, 'Ngamprah', 'town'], [C, 1030, 471, 'Cisarua', 'town'], [C, 850, 625, 'Jambudipa'], [C, 1030, 587, 'Cihanjuang'], [C, 1060, 626, 'Rahayu'], [C, 890, 853, 'Padaasih'],
  [C, 682, 882, 'Pakuhaji'], [C, 995, 935, 'Cihanjuang'], [C, 760, 1017, 'Cipageran'], [C, 1040, 1052, 'Sariwangi'], [C, 273, 872, 'Kertamulya'], [C, 420, 884, 'Mekar'], [C, 260, 1083, 'Simpang'], [C, 590, 1083, 'Lembang'],
  [C, 234, 658, '116', 'restricted'], [C, 434, 971, '122', 'restricted'],
  [C, 1020, 60, 'Kawasan', 'restricted'], [C, 1020, 96, 'Latihan', 'restricted'], [C, 1020, 132, 'Pertempuran', 'restricted'], [C, 1020, 168, 'Hutan Kopassus', 'restricted'],
  [D, 631, 236, 'Lembang', 'town'], [D, 520, 428, 'Gunungkahuripan'], [D, 600, 507, 'Pagungunsari'], [D, 520, 290, 'Cikahuripan'], [D, 866, 619, 'Ciburial'], [D, 966, 680, 'Mekarsaluyu'],
  [D, 525, 718, 'Ciumbuleuit'], [D, 840, 484, 'Mekarwangi'], [D, 900, 384, 'Langensari'],
  [E, 719, 539, 'Cupunagara'], [E, 320, 872, 'Suntenjaharja'], [E, 650, 1001, 'Suntenjaya'], [E, 220, 797, 'Cikole'], [E, 590, 1312, 'Mekarmanik'], [E, 145, 408, '251', 'shield']
];
for (const [t, x, y, s, kind = ''] of labels)
  out.push(`<text class="label ${kind}" x="${Math.round(t[0] + x / 3)}" y="${Math.round(t[1] + y / 3)}">${s}</text>`);
out.push('<defs><path id="p1" d="M1475 674Q1494 703 1540 699"/><path id="p2" d="M1755 751Q1775 756 1795 766"/><path id="p3" d="M486 673Q489 692 500 710"/></defs>');
for (const [id, s] of [['p1', 'Bandung Barat'], ['p2', 'Subang'], ['p3', 'Cianjur']])
  out.push(`<text class="label area"><textPath href="#${id}">${s}</textPath></text>`);

// site markers: offline ones carry a third value
const sites = [
  [B, [[249, 10], [321, 217], [996, 75], [972, 78], [24, 832], [105, 742], [134, 800], [147, 808], [162, 815, 1], [216, 810], [180, 818], [308, 800], [366, 782], [305, 835], [294, 862], [930, 740]]],
  [C, [[490, 668], [519, 685], [858, 665], [960, 620], [942, 682], [882, 690], [1107, 415], [1050, 512], [1088, 552, 1], [1098, 552, 1], [1187, 528], [1173, 553], [1173, 650], [1230, 693], [1011, 840], [1020, 908], [1029, 932], [969, 1034], [1053, 1078],
    [258, 788], [268, 802, 1], [270, 812], [380, 786], [408, 797], [352, 820], [372, 820], [95, 820], [126, 832], [110, 850], [153, 870, 1], [102, 935], [81, 938], [265, 885, 1], [268, 896, 1], [258, 905], [261, 928], [340, 905], [324, 930], [360, 970],
    [180, 998], [186, 1000], [246, 1043], [477, 875], [459, 877], [492, 928, 1], [549, 980], [495, 1024, 1], [645, 957], [675, 1034], [665, 1060], [645, 1070], [395, 1065], [420, 1090]]],
  [D, [[501, 185], [495, 235], [492, 282], [516, 313], [450, 334], [628, 243], [626, 270], [660, 290, 1], [650, 300], [636, 308], [670, 315], [712, 335, 1], [709, 345], [687, 342], [585, 335, 1], [585, 331], [773, 300], [816, 305], [803, 310], [825, 345], [756, 352], [768, 420], [768, 464], [845, 380], [915, 342], [888, 347], [873, 421],
    [438, 457], [436, 483], [470, 502, 1], [527, 461, 1], [513, 514], [485, 515], [475, 516], [462, 517], [189, 674], [273, 718], [687, 714]]],
  [E, [[170, 595, 1], [187, 600, 1], [243, 642, 1], [234, 652], [220, 685], [237, 694], [225, 820, 1], [312, 870], [418, 942], [545, 840], [549, 977], [516, 980], [573, 980], [642, 1030]]]
];
for (const [t, list] of sites) for (const [x, y, off] of list) {
  const px = (t[0] + x / 3).toFixed(1), py = (t[1] + y / 3).toFixed(1);
  const body = 'M0 30C-2 21-14 10-14 0A14 14 0 0 1 14 0C14 10 2 21 0 30Z';
  out.push(off
    ? `<path transform="translate(${px} ${py})" fill="#d1232a" fill-rule="evenodd" d="${body}M-7 0a7 7 0 1 0 14 0a7 7 0 1 0 -14 0Z"/>`
    : `<g transform="translate(${px} ${py})"><path fill="#008000" d="${body}"/><circle r="5" fill="#fff"/></g>`);
}
document.getElementById('map').innerHTML = out.join('');
```
